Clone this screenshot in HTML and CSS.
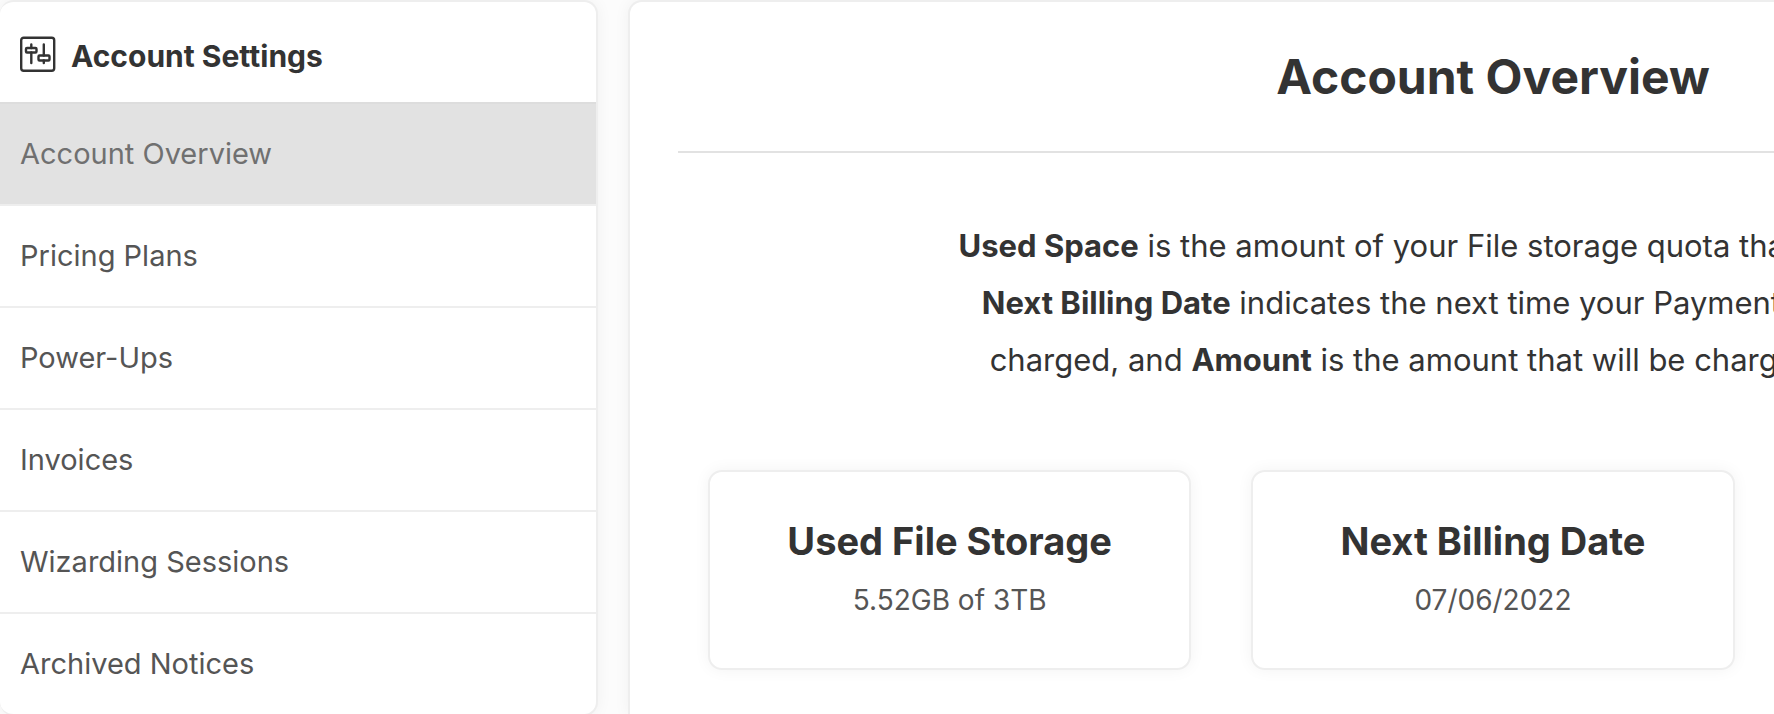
FILE: index.html
```html
<!DOCTYPE html>
<html lang="en">
<head>
<meta charset="utf-8">
<meta name="viewport" content="width=device-width, initial-scale=1">
<title>Account Overview</title>
<link rel="stylesheet" href="styles.css">
</head>
<body>
<div class="page">
  <aside class="sidebar">
    <h2 class="sidebar-title">
      <svg class="sidebar-icon" viewBox="0 0 36 36" fill="none" stroke="currentColor" stroke-width="2.400" stroke-linecap="round" stroke-linejoin="round" aria-hidden="true">
        <rect x="1.200" y="1.700" width="33" height="33" rx="2.500"/>
        <rect x="6" y="12" width="10.500" height="4.500" rx="1"/>
        <path d="M11.300 8.500v3.500M11.300 16.500v10.500"/>
        <rect x="18.500" y="19.500" width="11" height="5" rx="1"/>
        <path d="M23.800 8.500v11M23.800 24.500v2.500"/>
      </svg>
      Account Settings
    </h2>
    <nav class="menu">
      <a class="menu-item menu-item-active" href="#overview" aria-current="page">Account Overview</a>
      <a class="menu-item" href="#plans">Pricing Plans</a>
      <a class="menu-item" href="#power-ups">Power-Ups</a>
      <a class="menu-item" href="#invoices">Invoices</a>
      <a class="menu-item" href="#sessions">Wizarding Sessions</a>
      <a class="menu-item" href="#notices">Archived Notices</a>
    </nav>
  </aside>
  <main class="panel">
    <h1 class="panel-title">Account Overview</h1>
    <p class="intro"><b>Used Space</b> is the amount of your File storage quota that has been used.<br><b>Next Billing Date</b> indicates the next time your Payment Method will be<br>charged, and <b>Amount</b> is the amount that will be charged at that time.</p>
    <div class="cards">
      <section class="card">
        <h2 class="card-title">Used File Storage</h2>
        <p class="card-value">5.52GB of 3TB</p>
      </section>
      <section class="card">
        <h2 class="card-title">Next Billing Date</h2>
        <p class="card-value">07/06/2022</p>
      </section>
    </div>
  </main>
</div>
</body>
</html>
```
FILE: styles.css
```css
* {
  box-sizing: border-box;
}

body {
  margin: 0;
  background: #fcfcfc;
  color: #333;
  font-family: Inter, "Liberation Sans", sans-serif;
  overflow: hidden;
}

h1, h2, p {
  margin: 0;
}

.page {
  display: flex;
  align-items: stretch;
  gap: 30px;
  min-height: 100vh;
}

.sidebar,
.panel,
.card {
  background: #fff;
  border: 2px solid #eee;
  border-radius: 14px;
  box-shadow: 0 0 16px rgba(0, 0, 0, 0.05);
}

.sidebar {
  flex: 0 0 598px;
  align-self: flex-start;
  border-left: 0;
  overflow: hidden;
}

.sidebar-title {
  display: flex;
  align-items: flex-start;
  gap: 15px;
  padding: 34px 20px 26px;
  font-size: 30px;
  font-weight: 700;
  line-height: 40px;
}

.sidebar-icon {
  width: 36px;
  height: 36px;
}

.menu-item {
  display: block;
  padding: 30px 20px;
  border-top: 2px solid #eee;
  color: #555;
  font-size: 29px;
  line-height: 40px;
  text-decoration: none;
}

.menu-item-active {
  border-top-color: #ddd;
  background: #e2e2e2;
  color: #707070;
}

.panel {
  flex: 1 0 1730px;
  padding: 0 48px;
  border-bottom: 0;
  border-radius: 14px 14px 0 0;
}

.panel-title {
  padding: 45px 0 44px;
  border-bottom: 2px solid #e2e2e2;
  font-size: 48px;
  font-weight: 700;
  line-height: 60px;
  text-align: center;
}

.intro {
  padding: 64px 0 82px;
  font-size: 31px;
  line-height: 57px;
  text-align: center;
  white-space: nowrap;
}

.cards {
  display: grid;
  grid-template-columns: repeat(3, 1fr);
  gap: 60px;
  padding: 0 30px;
}

.card {
  padding: 43px 40px 48px;
  text-align: center;
}

.card-title {
  font-size: 38px;
  font-weight: 700;
  line-height: 52px;
}

.card-value {
  padding-top: 13px;
  color: #555;
  font-size: 28px;
  line-height: 40px;
}
```
